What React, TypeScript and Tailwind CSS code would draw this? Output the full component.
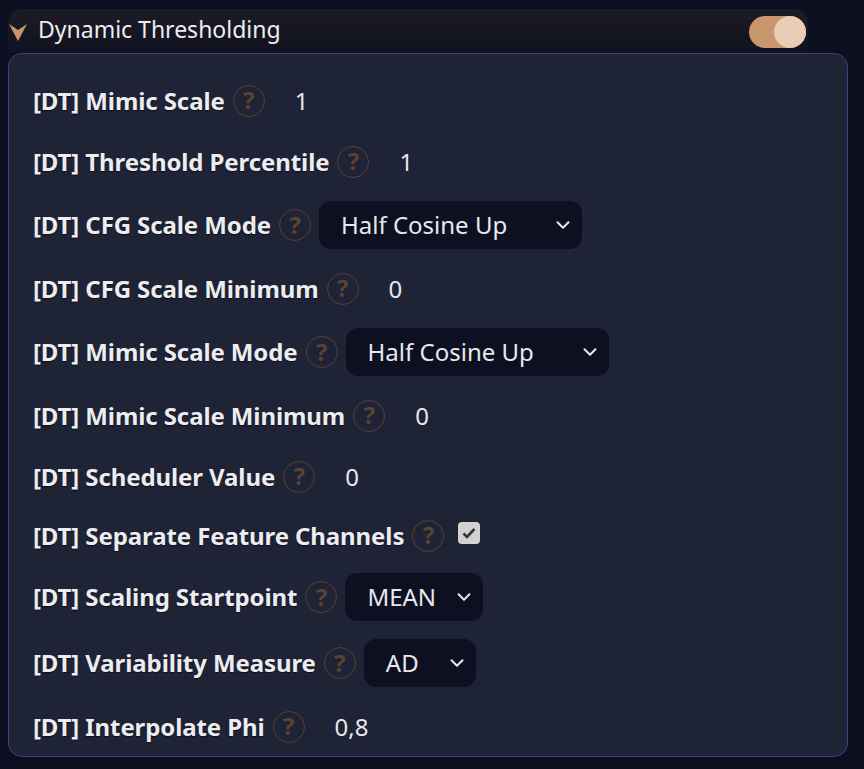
import React from "react";
import { ChevronDown } from "lucide-react";

const FONT = { fontFamily: '"Noto Sans", "Open Sans", sans-serif' };

function Help() {
  return (
    <div className="ml-2 flex h-[32px] w-[32px] shrink-0 items-center justify-center rounded-full border border-[#5a3e2c] pb-[1px] text-[24px] font-bold leading-none text-[#5e4230]">
      ?
    </div>
  );
}

function Label({ text }: { text: string }) {
  return (
    <span className="whitespace-nowrap text-[24px] font-bold tracking-[-0.1px] text-[#ececf1] [text-shadow:0_1px_1px_rgba(0,0,0,0.6)]">
      {text}
    </span>
  );
}

function Select({ value, width }: { value: string; width: number }) {
  return (
    <div
      className="ml-2 flex h-[48px] items-center justify-between rounded-[12px] bg-[#0d1020] pl-[22px] pr-[8px] text-[24px] text-[#e8e8ec]"
      style={{ width }}
    >
      <span>{value}</span>
      <ChevronDown size={22} strokeWidth={2.2} className="text-[#e8e8ec]" />
    </div>
  );
}

type Row =
  | { kind: "text"; label: string; value: string }
  | { kind: "select"; label: string; value: string; width: number }
  | { kind: "check"; label: string };

const rows: Row[] = [
  { kind: "text", label: "[DT] Mimic Scale", value: "1" },
  { kind: "text", label: "[DT] Threshold Percentile", value: "1" },
  { kind: "select", label: "[DT] CFG Scale Mode", value: "Half Cosine Up", width: 263 },
  { kind: "text", label: "[DT] CFG Scale Minimum", value: "0" },
  { kind: "select", label: "[DT] Mimic Scale Mode", value: "Half Cosine Up", width: 263 },
  { kind: "text", label: "[DT] Mimic Scale Minimum", value: "0" },
  { kind: "text", label: "[DT] Scheduler Value", value: "0" },
  { kind: "check", label: "[DT] Separate Feature Channels" },
  { kind: "select", label: "[DT] Scaling Startpoint", value: "MEAN", width: 138 },
  { kind: "select", label: "[DT] Variability Measure", value: "AD", width: 112 },
  { kind: "text", label: "[DT] Interpolate Phi", value: "0,8" },
];

export default function App() {
  return (
    <div className="h-[769px] w-[864px] overflow-hidden bg-[#0c0f1f]" style={FONT}>
      <div className="pl-[8px] pt-[9px]">
        {/* header */}
        <div className="flex h-[44px] w-[800px] items-center rounded-t-[14px] bg-gradient-to-b from-[#1d1b26] to-[#10121f] pr-[2px]">
          <svg width="18" height="17" viewBox="0 0 18 17" className="ml-[1px] mt-[2px]">
            <polygon points="0,0 9,6 18,0 9,17" fill="#c9966b" />
          </svg>
          <span className="ml-[11px] -mt-[3px] text-[23px] text-[#ececf1]">Dynamic Thresholding</span>
          <div className="ml-auto mt-[2px] flex h-[32px] w-[57px] items-center justify-end rounded-full bg-[#c8966c]">
            <div className="h-[32px] w-[32px] rounded-full bg-[#e6cdb4]" />
          </div>
        </div>
        {/* panel */}
        <div className="flex h-[704px] w-[840px] flex-col gap-[18px] rounded-[14px] border border-[#433f86] bg-[#1f2336] pl-[24px] pt-[25px]">
          {rows.map((r, i) => {
            if (r.kind === "text") {
              return (
                <div key={i} className="flex h-[43px] items-center">
                  <Label text={r.label} />
                  <Help />
                  <span className="ml-[30px] text-[24px] text-[#e8e8ec]">{r.value}</span>
                </div>
              );
            }
            if (r.kind === "select") {
              return (
                <div key={i} className="flex h-[48px] items-center">
                  <Label text={r.label} />
                  <Help />
                  <Select value={r.value} width={r.width} />
                </div>
              );
            }
            return (
              <div key={i} className="flex h-[39px] items-center">
                <Label text={r.label} />
                <Help />
                <div className="ml-[14px] -mt-[6px] flex h-[22px] w-[22px] items-center justify-center rounded-[4px] bg-[#d2d2d2]">
                  <svg width="14" height="12" viewBox="0 0 14 12">
                    <path d="M1.5 6.5 L5 10 L12.5 2" stroke="#333" strokeWidth="2.6" fill="none" />
                  </svg>
                </div>
              </div>
            );
          })}
        </div>
      </div>
    </div>
  );
}
